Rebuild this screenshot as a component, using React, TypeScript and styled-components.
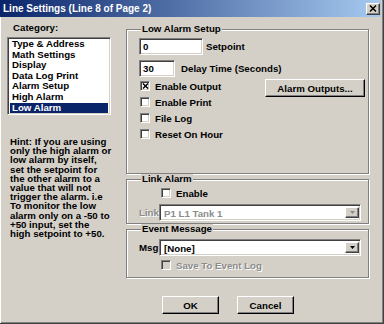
import React from "react";
import styled, { createGlobalStyle, css } from "styled-components";

const GlobalStyle = createGlobalStyle`
  html, body { margin: 0; padding: 0; }
  body {
    width: 384px;
    height: 324px;
    overflow: hidden;
    background: #d4d0c8;
    font-family: "Liberation Sans", Arial, sans-serif;
    font-size: 9.7px;
    font-weight: bold;
    color: #000;
  }
  * { box-sizing: border-box; }
`;

const raised = css`
  background: #d4d0c8;
  border: 1px solid;
  border-color: #fff #404040 #404040 #fff;
  box-shadow: inset -1px -1px 0 #808080;
`;

const sunken = css`
  border: 1px solid;
  border-color: #808080 #fff #fff #808080;
  box-shadow: inset 1px 1px 0 #404040, inset -1px -1px 0 #d4d0c8;
`;

const disabledText = css`
  color: #8c8c8c;
  text-shadow: 1px 1px 0 #fff;
`;

const Window = styled.div`
  width: 384px;
  height: 324px;
  display: flex;
  flex-direction: column;
  border-right: 1px solid #404040;
  border-bottom: 1px solid #404040;
  box-shadow: inset 1px 0 0 #fff, inset -1px -1px 0 #808080;
`;

const TitleBar = styled.div`
  height: 17px;
  margin-right: 2px;
  padding: 0 1px 0 3px;
  display: flex;
  align-items: center;
  justify-content: space-between;
  background: linear-gradient(to right, #0a246a, #a6caf0);
  color: #fff;
  font-size: 10px;
  white-space: nowrap;
`;

const CloseButton = styled.span`
  ${raised}
  width: 14px;
  height: 12px;
  display: flex;
  align-items: center;
  justify-content: center;
`;

const Main = styled.div`
  flex: 1;
  display: flex;
`;

const LeftColumn = styled.div`
  width: 111px;
  padding: 6px 0 0 7px;
  display: flex;
  flex-direction: column;
`;

const CategoryLabel = styled.div`
  margin: 0 0 4px 6px;
  line-height: 10px;
  height: 10px;
`;

const ListBox = styled.div`
  ${sunken}
  width: 104px;
  height: 78px;
  background: #fff;
  padding: 1px 2px;
`;

const ListItem = styled.div<{ $selected?: boolean }>`
  height: 10.6px;
  line-height: 10.6px;
  padding-left: 2px;
  white-space: nowrap;
  background: ${(p) => (p.$selected ? "#0a246a" : "transparent")};
  color: ${(p) => (p.$selected ? "#fff" : "#000")};
`;

const Hint = styled.div`
  margin-top: 22px;
  padding-left: 3px;
  line-height: 9.2px;
  white-space: pre;
`;

const RightColumn = styled.div`
  margin-left: 15px;
  width: 243px;
  padding-top: 7px;
  display: flex;
  flex-direction: column;
`;

const GroupBox = styled.fieldset<{ $height: number }>`
  margin: 0;
  min-width: 0;
  height: ${(p) => p.$height}px;
  padding: ${(p) => (p.$height > 100 ? 4 : 1)}px 3px 0 12px;
  border: 1px solid #808080;
  box-shadow: inset 1px 1px 0 #fff, 1px 1px 0 #fff;
`;

const Legend = styled.legend`
  margin-left: 2px;
  padding: 0 1px;
  line-height: 10px;
  background: #d4d0c8;
`;

const FieldRow = styled.div<{ $gap: number; $top?: number }>`
  display: flex;
  align-items: center;
  height: 17px;
  margin-top: ${(p) => p.$top ?? 0}px;
  gap: ${(p) => p.$gap}px;
`;

const TextBox = styled.div<{ $width: number }>`
  ${sunken}
  width: ${(p) => p.$width}px;
  height: 17px;
  background: #fff;
  padding: 0 3px;
  line-height: 15px;
`;

const CheckRow = styled.div<{ $indent?: number; $top?: number }>`
  height: 16px;
  margin-top: ${(p) => p.$top ?? 0}px;
  padding-left: ${(p) => p.$indent ?? 1}px;
  display: flex;
  align-items: center;
  gap: 5px;
`;

const CheckBox = styled.span<{ $disabled?: boolean }>`
  ${sunken}
  width: 10px;
  height: 10px;
  flex: none;
  background: ${(p) => (p.$disabled ? "#d4d0c8" : "#fff")};
  display: flex;
  align-items: center;
  justify-content: center;
`;

const CheckText = styled.span<{ $disabled?: boolean }>`
  white-space: nowrap;
  ${(p) => p.$disabled && disabledText}
`;

const PushButton = styled.button<{ $width: number }>`
  ${raised}
  width: ${(p) => p.$width}px;
  height: 18px;
  padding: 0;
  font: inherit;
  color: #000;
  border-color: #fff #000 #000 #fff;
`;

const SideButton = styled(PushButton)`
  margin-left: auto;
  align-self: flex-start;
  margin-top: 1px;
`;

const FieldLabel = styled.span<{ $disabled?: boolean }>`
  width: 20px;
  white-space: nowrap;
  ${(p) => p.$disabled && disabledText}
`;

const Combo = styled.div`
  ${sunken}
  width: 202px;
  height: 17px;
  padding: 2px 1px 2px 2px;
  background: #fff;
  display: flex;
`;

const ComboText = styled.span<{ $disabled?: boolean }>`
  flex: 1;
  padding-left: 2px;
  line-height: 13px;
  white-space: nowrap;
  ${(p) => p.$disabled && disabledText}
`;

const ComboArrow = styled.span`
  ${raised}
  width: 14px;
  display: flex;
  align-items: center;
  justify-content: center;
`;

const ButtonRow = styled.div`
  margin-top: 18px;
  padding-left: 36px;
  display: flex;
  gap: 18px;
`;

const XMark = ({ size }: { size: number }) => (
  <svg width={size} height={size - 1} viewBox="0 0 8 7">
    <path d="M1 0.5 L7 6.5 M7 0.5 L1 6.5" stroke="#000" strokeWidth="1.6" />
  </svg>
);

const Arrow = ({ color }: { color: string }) => (
  <svg width="5" height="3" viewBox="0 0 5 3">
    <path d="M0 0 H5 L2.5 3 Z" fill={color} />
  </svg>
);

const categories = [
  "Type & Address",
  "Math Settings",
  "Display",
  "Data Log Print",
  "Alarm Setup",
  "High Alarm",
  "Low Alarm",
];

const hint = `Hint: If you are using
only the high alarm or
low alarm by itself,
set the setpoint for
the other alarm to a
value that will not
trigger the alarm. i.e
To monitor the low
alarm only on a -50 to
+50 input, set the
high setpoint to +50.`;

export default function App() {
  return (
    <>
      <GlobalStyle />
      <Window>
        <TitleBar>
          <span>Line Settings (Line 8 of Page 2)</span>
          <CloseButton>
            <svg width="8" height="7" viewBox="0 0 8 7">
              <path d="M1 0.5 L7 6.5 M7 0.5 L1 6.5" stroke="#000" strokeWidth="1.5" />
            </svg>
          </CloseButton>
        </TitleBar>
        <Main>
          <LeftColumn>
            <CategoryLabel>Category:</CategoryLabel>
            <ListBox>
              {categories.map((c) => (
                <ListItem key={c} $selected={c === "Low Alarm"}>
                  {c}
                </ListItem>
              ))}
            </ListBox>
            <Hint>{hint}</Hint>
          </LeftColumn>
          <RightColumn>
            <GroupBox $height={150}>
              <Legend>Low Alarm Setup</Legend>
              <FieldRow $gap={3}>
                <TextBox $width={64}>0</TextBox>
                <span>Setpoint</span>
              </FieldRow>
              <FieldRow $gap={6} $top={5}>
                <TextBox $width={36}>30</TextBox>
                <span>Delay Time (Seconds)</span>
              </FieldRow>
              <CheckRow $top={1}>
                <CheckBox>
                  <XMark size={7} />
                </CheckBox>
                <CheckText>Enable Output</CheckText>
                <SideButton $width={100}>Alarm Outputs...</SideButton>
              </CheckRow>
              <CheckRow>
                <CheckBox />
                <CheckText>Enable Print</CheckText>
              </CheckRow>
              <CheckRow>
                <CheckBox />
                <CheckText>File Log</CheckText>
              </CheckRow>
              <CheckRow>
                <CheckBox />
                <CheckText>Reset On Hour</CheckText>
              </CheckRow>
            </GroupBox>
            <GroupBox $height={50}>
              <Legend>Link Alarm</Legend>
              <CheckRow $indent={22}>
                <CheckBox />
                <CheckText>Enable</CheckText>
              </CheckRow>
              <FieldRow $gap={0} $top={3}>
                <FieldLabel $disabled>Link</FieldLabel>
                <Combo>
                  <ComboText $disabled>P1 L1 Tank 1</ComboText>
                  <ComboArrow>
                    <Arrow color="#8c8c8c" />
                  </ComboArrow>
                </Combo>
              </FieldRow>
            </GroupBox>
            <GroupBox $height={54}>
              <Legend>Event Message</Legend>
              <FieldRow $gap={0} $top={4}>
                <FieldLabel>Msg</FieldLabel>
                <Combo>
                  <ComboText>[None]</ComboText>
                  <ComboArrow>
                    <Arrow color="#000" />
                  </ComboArrow>
                </Combo>
              </FieldRow>
              <CheckRow $indent={22} $top={1}>
                <CheckBox $disabled />
                <CheckText $disabled>Save To Event Log</CheckText>
              </CheckRow>
            </GroupBox>
            <ButtonRow>
              <PushButton $width={57}>OK</PushButton>
              <PushButton $width={57}>Cancel</PushButton>
            </ButtonRow>
          </RightColumn>
        </Main>
      </Window>
    </>
  );
}
